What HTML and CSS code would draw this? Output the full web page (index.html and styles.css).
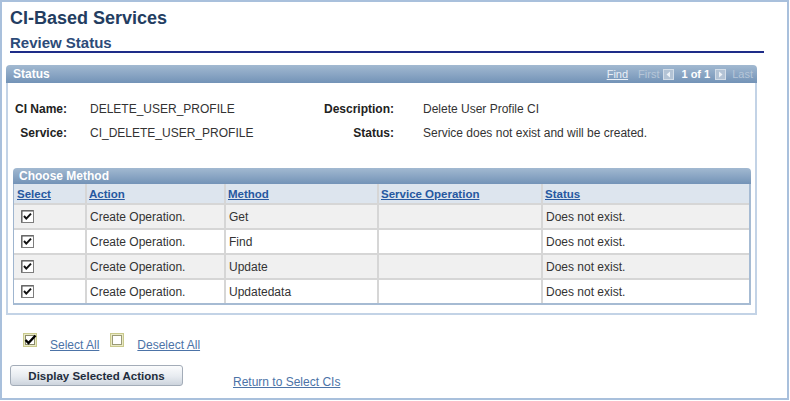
FILE: index.html
```html
<!DOCTYPE html>
<html>
<head>
<meta charset="utf-8">
<title>CI-Based Services</title>
<link rel="stylesheet" href="styles.css">
</head>
<body>
<div class="frame">
  <h1 class="title">CI-Based Services</h1>
  <h2 class="subtitle">Review Status</h2>

  <div class="panel">
    <div class="panel-head">
      <span class="panel-title">Status</span>
      <div class="nav">
        <a class="nav-find" href="#">Find</a>
        <span class="nav-off nav-first">First</span>
        <svg class="nav-arrow" width="11" height="11" viewBox="0 0 11 11"><rect x="0.5" y="0.5" width="10" height="10" fill="#b3c3d5" stroke="#d3dde8"/><path d="M7 2.5 L3.5 5.5 L7 8.5 Z" fill="#eef3f8"/></svg>
        <span class="nav-count">1 of 1</span>
        <svg class="nav-arrow" width="11" height="11" viewBox="0 0 11 11"><rect x="0.5" y="0.5" width="10" height="10" fill="#b3c3d5" stroke="#d3dde8"/><path d="M4 2.5 L7.5 5.5 L4 8.5 Z" fill="#eef3f8"/></svg>
        <span class="nav-off nav-last">Last</span>
      </div>
    </div>
    <div class="panel-body">
      <div class="info">
        <div class="lbl">CI Name:</div>
        <div class="val">DELETE_USER_PROFILE</div>
        <div class="lbl lbl2">Description:</div>
        <div class="val val2">Delete User Profile CI</div>
        <div class="lbl">Service:</div>
        <div class="val">CI_DELETE_USER_PROFILE</div>
        <div class="lbl lbl2">Status:</div>
        <div class="val val2">Service does not exist and will be created.</div>
      </div>

      <div class="grid">
        <div class="grid-head">Choose Method</div>
        <div class="grid-body">
          <div class="row colhead">
            <div class="cell c1"><a href="#">Select</a></div>
            <div class="cell"><a href="#">Action</a></div>
            <div class="cell"><a href="#">Method</a></div>
            <div class="cell"><a href="#">Service Operation</a></div>
            <div class="cell"><a href="#">Status</a></div>
          </div>
          <div class="row odd">
            <div class="cell c1"><svg class="cb" width="13" height="13" viewBox="0 0 13 13"><rect x="0.5" y="0.5" width="12" height="12" fill="#fff" stroke="#7d7d7d"/><path d="M1 1 H12 M1 1 V12" stroke="#555" stroke-width="1"/><path d="M3 6 L5.3 8.6 L10 3.6" fill="none" stroke="#111" stroke-width="2"/></svg></div>
            <div class="cell">Create Operation.</div>
            <div class="cell">Get</div>
            <div class="cell"></div>
            <div class="cell">Does not exist.</div>
          </div>
          <div class="row">
            <div class="cell c1"><svg class="cb" width="13" height="13" viewBox="0 0 13 13"><rect x="0.5" y="0.5" width="12" height="12" fill="#fff" stroke="#7d7d7d"/><path d="M1 1 H12 M1 1 V12" stroke="#555" stroke-width="1"/><path d="M3 6 L5.3 8.6 L10 3.6" fill="none" stroke="#111" stroke-width="2"/></svg></div>
            <div class="cell">Create Operation.</div>
            <div class="cell">Find</div>
            <div class="cell"></div>
            <div class="cell">Does not exist.</div>
          </div>
          <div class="row odd">
            <div class="cell c1"><svg class="cb" width="13" height="13" viewBox="0 0 13 13"><rect x="0.5" y="0.5" width="12" height="12" fill="#fff" stroke="#7d7d7d"/><path d="M1 1 H12 M1 1 V12" stroke="#555" stroke-width="1"/><path d="M3 6 L5.3 8.6 L10 3.6" fill="none" stroke="#111" stroke-width="2"/></svg></div>
            <div class="cell">Create Operation.</div>
            <div class="cell">Update</div>
            <div class="cell"></div>
            <div class="cell">Does not exist.</div>
          </div>
          <div class="row">
            <div class="cell c1"><svg class="cb" width="13" height="13" viewBox="0 0 13 13"><rect x="0.5" y="0.5" width="12" height="12" fill="#fff" stroke="#7d7d7d"/><path d="M1 1 H12 M1 1 V12" stroke="#555" stroke-width="1"/><path d="M3 6 L5.3 8.6 L10 3.6" fill="none" stroke="#111" stroke-width="2"/></svg></div>
            <div class="cell">Create Operation.</div>
            <div class="cell">Updatedata</div>
            <div class="cell"></div>
            <div class="cell">Does not exist.</div>
          </div>
        </div>
      </div>
    </div>
  </div>

  <div class="select-row">
    <svg class="sel-icon" width="14" height="14" viewBox="0 0 14 14"><rect x="0.5" y="0.5" width="13" height="13" fill="#e9e9c4" stroke="#c9c98c"/><rect x="2.5" y="2.5" width="9" height="9" fill="#fff" stroke="#8a8a6a"/><path d="M2.5 7 L5.5 10 L12.5 2.5" fill="none" stroke="#000" stroke-width="2.4"/></svg>
    <a class="link sel-link" href="#">Select All</a>
    <svg class="sel-icon desel" width="14" height="14" viewBox="0 0 14 14"><rect x="0.5" y="0.5" width="13" height="13" fill="#e9e9c4" stroke="#c9c98c"/><rect x="2.5" y="2.5" width="9" height="9" fill="#fff" stroke="#9a9a78"/></svg>
    <a class="link sel-link" href="#">Deselect All</a>
  </div>

  <div class="action-row">
    <button class="btn">Display Selected Actions</button>
    <a class="link return-link" href="#">Return to Select CIs</a>
  </div>
</div>
</body>
</html>
```

FILE: styles.css
```css
* { box-sizing: border-box; }

body {
  margin: 0;
  background: #fff;
  font-family: "Liberation Sans", Arial, sans-serif;
  font-size: 12px;
  color: #333;
}

.frame {
  width: 789px;
  height: 400px;
  border: 2px solid #a9c0dc;
}

.title {
  margin: 6px 0 0 8px;
  font-size: 18px;
  line-height: 20px;
  font-weight: bold;
  color: #233d61;
}

.subtitle {
  margin: 6px 0 0 8px;
  width: 754px;
  font-size: 15px;
  line-height: 17px;
  font-weight: bold;
  color: #2c4b78;
  border-bottom: 2px solid #1e2c88;
}

.panel {
  margin: 12px 0 0 4px;
  width: 751px;
}

.panel-head {
  height: 18px;
  display: flex;
  align-items: center;
  justify-content: space-between;
  padding: 0 4px 0 7px;
  border-radius: 4px 4px 0 0;
  background: linear-gradient(#a2b9d1, #7393b7);
}

.panel-title {
  color: #fff;
  font-weight: bold;
  font-size: 12px;
}

.nav {
  display: flex;
  align-items: center;
  font-size: 11px;
}

.nav-find {
  color: #e9eff7;
  text-decoration: underline;
}

.nav-off { color: #b6c6d8; }
.nav-first { margin: 0 4px 0 10px; }
.nav-last { margin-left: 6px; }

.nav-arrow { display: block; }

.nav-count {
  color: #fff;
  font-weight: bold;
  margin: 0 5px 0 7px;
}

.panel-body {
  height: 232px;
  border: 2px solid #c3d3e6;
  border-top: 0;
  padding: 14px 0 0 0;
}

.info {
  display: grid;
  grid-template-columns: 59px 227px 100px auto;
  grid-auto-rows: 24px;
  align-items: center;
}

.lbl {
  text-align: right;
  font-weight: bold;
  color: #222;
}

.val { padding-left: 23px; color: #333; }
.val2 { padding-left: 29px; }

.grid {
  margin: 23px 0 0 5px;
  width: 738px;
}

.grid-head {
  height: 16px;
  line-height: 16px;
  padding-left: 6px;
  color: #fff;
  font-weight: bold;
  font-size: 12px;
  border-radius: 4px 4px 0 0;
  background: linear-gradient(#a2b9d1, #7393b7);
}

.grid-body {
  border-left: 1px solid #9fb5cf;
  border-right: 2px solid #a6bbd3;
  border-bottom: 2px solid #a6bbd3;
}

.row {
  display: grid;
  grid-template-columns: 71px 139px 153px 164px 208px;
  height: 25px;
  border-top: 2px solid #d6d6d6;
  background: #fff;
}

.row.odd { background: #f0f0f0; }

.row.colhead {
  height: 19px;
  border-top: 0;
  background: #dde5ee;
}

.cell {
  display: flex;
  align-items: center;
  padding-left: 3px;
  border-left: 2px solid #d6d6d6;
  color: #333;
  white-space: nowrap;
}

.cell.c1 {
  border-left: 0;
  padding-left: 7px;
}

.colhead .cell { padding-left: 2px; }
.colhead .cell.c1 { padding-left: 3px; }

.colhead a {
  color: #2658a0;
  font-weight: bold;
  font-size: 11.5px;
  text-decoration: underline;
}

.cb { display: block; }

.select-row {
  display: flex;
  align-items: flex-start;
  margin: 18px 0 0 21px;
}

.sel-icon { display: block; }
.sel-icon.desel { margin-left: 11px; }

.link {
  color: #4c73a7;
  text-decoration: underline;
  line-height: 16px;
}

.sel-link {
  margin: 4px 0 0 13px;
}

.action-row {
  display: flex;
  align-items: flex-start;
  margin: 12px 0 0 8px;
}

.btn {
  width: 173px;
  height: 21px;
  padding: 0;
  border: 1px solid #a3acb8;
  border-radius: 3px;
  background: linear-gradient(#fbfcfd, #e7ebf0 55%, #cdd4dd);
  font-family: "Liberation Sans", Arial, sans-serif;
  font-size: 11.5px;
  font-weight: bold;
  color: #1f2d3d;
}

.return-link {
  margin: 9px 0 0 50px;
}
```
